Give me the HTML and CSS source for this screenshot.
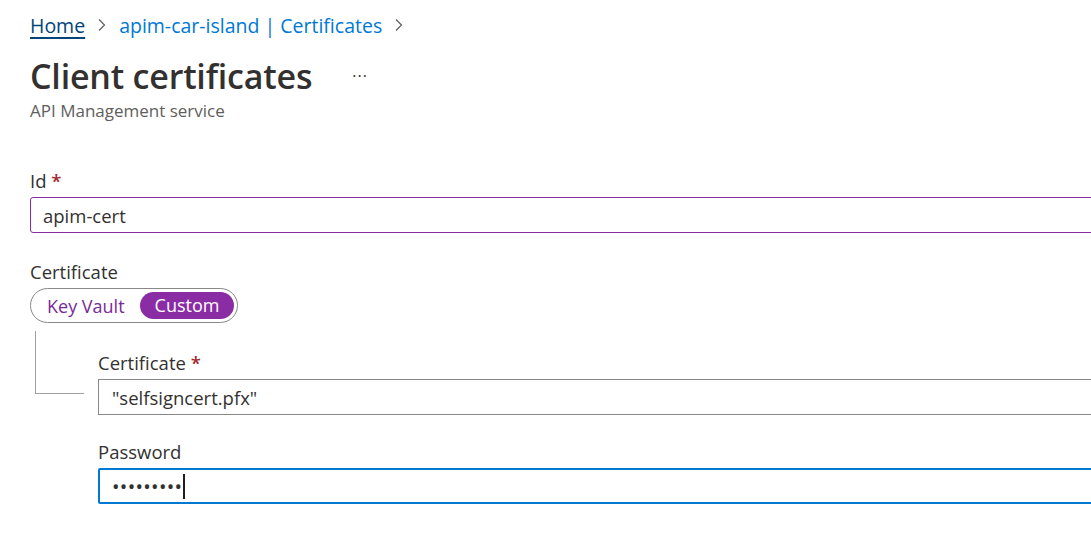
FILE: index.html
```html
<!DOCTYPE html>
<html lang="en">
<head>
<meta charset="utf-8">
<title>Client certificates</title>
<link rel="stylesheet" href="styles.css">
</head>
<body>
<div class="page">
  <nav class="crumbs">
    <a class="crumb home" href="#">Home</a>
    <span class="chev"><svg width="10" height="14" viewBox="0 0 10 14"><path d="M2 1.5 L7.5 7 L2 12.5" fill="none" stroke="#605e5c" stroke-width="1.2"/></svg></span>
    <a class="crumb" href="#">apim-car-island | Certificates</a>
    <span class="chev"><svg width="10" height="14" viewBox="0 0 10 14"><path d="M2 1.5 L7.5 7 L2 12.5" fill="none" stroke="#605e5c" stroke-width="1.2"/></svg></span>
  </nav>
  <header class="head">
    <div class="title-row">
      <h1 class="title">Client certificates</h1>
      <span class="more">···</span>
    </div>
    <div class="subtitle">API Management service</div>
  </header>

  <div class="form">
    <div class="field">
      <label class="label">Id <span class="req">*</span></label>
      <div class="input input-id">apim-cert</div>
    </div>

    <div class="field field-cert">
      <label class="label">Certificate</label>
      <div class="toggle">
        <span class="opt">Key Vault</span>
        <span class="opt opt-on">Custom</span>
      </div>
    </div>

    <div class="nested">
      <div class="tree"></div>
      <div class="nested-fields">
        <div class="field">
          <label class="label">Certificate <span class="req">*</span></label>
          <div class="input input-plain">"selfsigncert.pfx"</div>
        </div>
        <div class="field field-pw">
          <label class="label">Password</label>
          <div class="input input-focus"><span class="dots">•••••••••</span><span class="caret"></span></div>
        </div>
      </div>
    </div>
  </div>
</div>
</body>
</html>
```

FILE: styles.css
```css
html, body {
  margin: 0;
  padding: 0;
  background: #ffffff;
  overflow: hidden;
}
body {
  font-family: "Open Sans", "Noto Sans", sans-serif;
  color: #323130;
  width: 1091px;
  height: 551px;
}
.page {
  padding: 10px 0 0 30px;
}
.crumbs {
  display: flex;
  align-items: center;
  gap: 12px;
  height: 30px;
  font-size: 19.5px;
}
.crumb {
  color: #0078d4;
  text-decoration: none;
}
.crumb.home {
  color: #004578;
  text-decoration: underline;
  text-underline-offset: 4px;
  text-decoration-thickness: 2px;
}
.chev {
  display: flex;
  align-items: center;
}
.head {
  margin-top: 14px;
}
.title-row {
  display: flex;
  align-items: center;
}
.title {
  margin: 0;
  font-size: 34px;
  font-weight: 600;
  line-height: 44px;
  letter-spacing: -0.2px;
}
.more {
  margin-left: 40px;
  font-size: 16px;
  color: #323130;
  letter-spacing: 1px;
}
.subtitle {
  font-size: 17px;
  color: #605e5c;
  line-height: 22px;
  margin-top: 2px;
}
.form {
  margin-top: 48px;
}
.field {
  display: flex;
  flex-direction: column;
}
.label {
  font-size: 18.5px;
  line-height: 21px;
  height: 21px;
  margin-bottom: 6px;
}
.req {
  color: #a4262c;
  font-weight: 600;
}
.input {
  box-sizing: border-box;
  width: 1100px;
  height: 36px;
  border: 1px solid #8a8886;
  border-radius: 2px;
  padding: 0 12px;
  font-size: 18.5px;
  line-height: 33px;
  display: flex;
  align-items: center;
}
.input-id {
  border-color: #8a2da5;
  border-radius: 3px;
}
.input-plain {
  width: 1010px;
  padding-left: 13px;
  border-radius: 0;
}
.input-focus {
  width: 1010px;
  border: 2px solid #0078d4;
  padding-left: 12px;
}
.field-cert {
  margin-top: 28px;
}
.toggle {
  margin-top: 0;
  display: flex;
  align-items: center;
  width: 208px;
  height: 35px;
  box-sizing: border-box;
  border: 1px solid #8a8886;
  border-radius: 18px;
  padding: 0 3px 0 16px;
  justify-content: space-between;
}
.opt {
  font-size: 18px;
  color: #7a2a98;
}
.opt-on {
  background: #8a2da5;
  color: #ffffff;
  border-radius: 14px;
  height: 27px;
  line-height: 26px;
  width: 94px;
  text-align: center;
}
.nested {
  display: flex;
  margin-top: 8px;
}
.tree {
  width: 48px;
  height: 62px;
  margin-left: 5px;
  border-left: 1px solid #a19f9d;
  border-bottom: 1px solid #a19f9d;
  flex: none;
}
.nested-fields {
  margin-left: 14px;
  padding-top: 21px;
}
.field-pw {
  margin-top: 26px;
}
.dots {
  font-size: 20px;
  letter-spacing: 0.3px;
  color: #323130;
}
.caret {
  display: inline-block;
  width: 2px;
  height: 25px;
  background: #201f1e;
  margin-left: 1px;
}
```
